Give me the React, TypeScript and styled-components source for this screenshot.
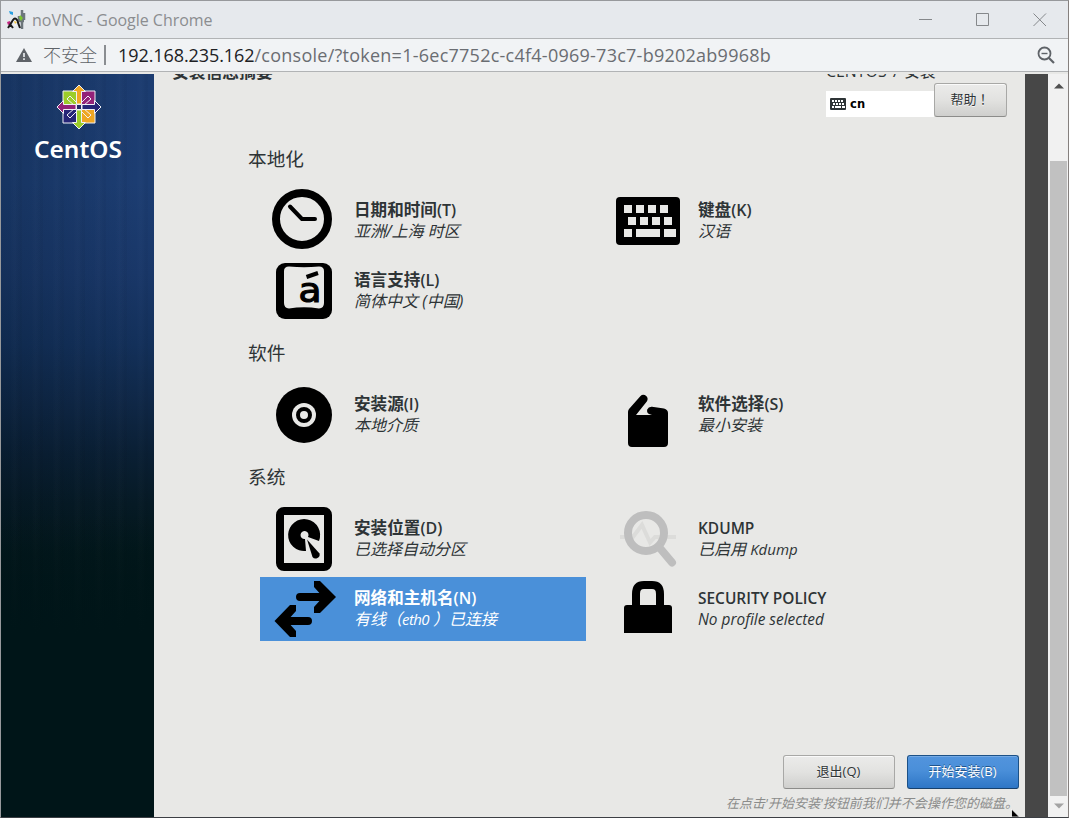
import React from 'react';
import styled, { createGlobalStyle } from 'styled-components';

const GlobalStyle = createGlobalStyle`
  * { box-sizing: border-box; }
  body { margin: 0; overflow: hidden; background: #e8e8e6; }
`;

const uiFont = '"Open Sans", "Noto Sans CJK SC", sans-serif';
const chromeFont = '"Open Sans", "Noto Sans CJK SC", sans-serif';

const Window = styled.div`
  width: 1069px;
  height: 818px;
  display: flex;
  flex-direction: column;
  overflow: hidden;
  border: 1px solid #97999c;
  border-right-color: #85807e;
  border-bottom-color: #3c3f44;
  font-family: ${uiFont};
  color: #2e3436;
`;

const TitleBar = styled.header`
  flex: none;
  height: 37px;
  display: flex;
  align-items: center;
  background: #e6e9ed;
  padding: 0 21px 0 5px;
`;

const WindowTitle = styled.span`
  margin-left: 6px;
  flex: 1;
  font: 400 16px/24px ${chromeFont};
  letter-spacing: -0.03px;
  color: #8b8d90;
  white-space: nowrap;
`;

const WindowControls = styled.div`
  display: flex;
  align-items: center;
  gap: 43px;
  svg { display: block; }
`;

const AddressBar = styled.div`
  flex: none;
  height: 34px;
  display: flex;
  align-items: center;
  background: #f1f3f5;
  border-top: 1px solid #b1b3b5;
  border-bottom: 1px solid #b1b3b5;
  padding: 0 13px 0 15px;
  font: 400 18px/28px ${chromeFont};
  white-space: nowrap;
`;

const Insecure = styled.span`
  margin-left: 11px;
  color: #5f6368;
  font-weight: 300;
`;

const Divider = styled.span`
  width: 2px;
  height: 20px;
  margin: 0 12px 0 7px;
  background: #8a8d91;
`;

const Url = styled.span`
  flex: 1;
  color: #6a6d72;
  letter-spacing: 0.17px;
  b { font-weight: 400; color: #202124; letter-spacing: -0.08px; }
`;

const UrlPath = styled.span`
  letter-spacing: 0.25px;
`;

const Viewport = styled.div`
  flex: 1;
  min-height: 0;
  display: flex;
  margin-top: 2px;
  overflow: hidden;
`;

const Sidebar = styled.aside`
  flex: none;
  width: 153px;
  display: flex;
  flex-direction: column;
  align-items: center;
  padding: 9px 0 0 2px;
  background:
    linear-gradient(180deg, #1c3c7000 440px, #001518 560px),
    repeating-linear-gradient(90deg, #ffffff00 0 9px, #ffffff03 13px 14px, #00000008 19px 21px),
    linear-gradient(90deg, #00101c30, transparent 90%),
    linear-gradient(180deg, #1c3c70 0, #1c3d72 110px, #193768 200px, #13305a 270px, #0f2746 330px, #0a1f34 380px, #061a25 430px, #02171b 480px, #001518 540px);
`;

const Main = styled.main`
  flex: none;
  width: 871px;
  display: flex;
  flex-direction: column;
  overflow: hidden;
  background: #e8e8e6;
`;

const HubHeader = styled.div`
  flex: none;
  height: 70px;
  display: flex;
  justify-content: space-between;
  padding: 0 18px;
`;

const HubTitle = styled.h1`
  margin: -11px 0 0;
  font-size: 16.8px;
  line-height: 17px;
  font-weight: 700;
`;

const HeaderRight = styled.div`
  width: 181px;
`;

const ProductName = styled.div`
  height: 20px;
  margin-top: -11px;
  font-size: 15.9px;
  line-height: 17px;
  white-space: nowrap;
`;

const HeaderControls = styled.div`
  display: flex;
  align-items: flex-end;
`;

const Layout = styled.div`
  flex: 1;
  height: 26px;
  display: flex;
  align-items: center;
  gap: 4px;
  padding-left: 4px;
  background: #fff;
  color: #000;
  font: 700 11.5px/26px "DejaVu Sans", sans-serif;
  letter-spacing: 0.3px;
`;

const Button = styled.button<{ $width: number; $primary?: boolean }>`
  width: ${(p) => p.$width}px;
  height: 34px;
  padding: 0 1px 2px 0;
  border: 1px solid ${(p) => (p.$primary ? '#1c5187' : '#a8a8a6')};
  border-bottom-color: ${(p) => (p.$primary ? '#17406c' : '#8c8c8a')};
  border-radius: 3px;
  background: ${(p) => (p.$primary ? 'linear-gradient(#5294dd, #4a8fd9 45%, #2e76c6)' : 'linear-gradient(#ebebea, #e2e2e0 50%, #cfcfcd)')};
  box-shadow: inset 0 1px ${(p) => (p.$primary ? '#75aae4' : '#fafafa')};
  color: ${(p) => (p.$primary ? '#fff' : '#2e3436')};
  text-shadow: 0 ${(p) => (p.$primary ? '-1px #22558c' : '1px #f6f6f6')};
  font: 400 13px/30px ${uiFont};
`;

const WideMark = styled.span`
  font-family: "Noto Sans CJK TC", sans-serif;
`;

const Sections = styled.div`
  flex: 1;
  display: flex;
  flex-direction: column;
  gap: 15px;
  padding-left: 94px;
`;

const Heading = styled.h2`
  margin: 0 0 15px;
  font-size: 18.67px;
  line-height: 30px;
  font-weight: 400;
`;

const SpokeGrid = styled.div`
  display: grid;
  grid-template-columns: 326px 326px;
  column-gap: 18px;
  row-gap: 6px;
  margin-left: 12px;
`;

const SpokeCard = styled.div<{ $selected?: boolean }>`
  height: 64px;
  display: flex;
  padding-left: 12px;
  background: ${(p) => (p.$selected ? '#4a90d9' : 'transparent')};
  color: ${(p) => (p.$selected ? '#fff' : 'inherit')};
  > svg { flex: none; display: block; }
`;

const SpokeText = styled.div`
  padding: 10px 0 0 18px;
  white-space: nowrap;
`;

const SpokeName = styled.div`
  font-size: 16.6px;
  line-height: 21px;
  font-weight: 700;
`;

const Latin = styled.span<{ $size: number; $ls?: number; $weight?: number }>`
  font-size: ${(p) => p.$size}px;
  letter-spacing: ${(p) => p.$ls ?? 0}px;
  font-weight: ${(p) => p.$weight ?? 'inherit'};
`;

const SpokeStatus = styled.div`
  font-size: 16px;
  line-height: 21px;
  font-style: italic;
`;

const Footer = styled.footer`
  flex: none;
  height: 62px;
  display: flex;
  flex-direction: column;
  align-items: flex-end;
  padding-right: 6px;
`;

const FooterButtons = styled.div`
  display: flex;
  gap: 12px;
`;

const Note = styled.div`
  margin: 4px 1px 0 0;
  font-size: 13.02px;
  line-height: 20px;
  font-style: italic;
  color: #8b8c8b;
  white-space: nowrap;
`;

const Backdrop = styled.div`
  flex: 1;
  background: #474747;
`;

const Scrollbar = styled.div`
  flex: none;
  width: 20px;
  display: flex;
  flex-direction: column;
  align-items: center;
  background: #f1f1f1;
  padding: 9px 0 8px 1px;
  svg { flex: none; display: block; }
`;

const Thumb = styled.div`
  width: 17px;
  height: 636px;
  margin: 72px 0 7px;
  background: #c1c1c1;
`;

const Pointer = styled.svg`
  position: absolute;
  left: 1010px;
  top: 808px;
`;

const Favicon = () => (
  <svg width="20" height="20" viewBox="0 0 20 20">
    <path d="M16 0v19M13 6v5h5M18 3v7" stroke="#6d767b" strokeWidth="2.5" fill="none" />
    <path d="M3 1l4 1v3l-3-1z" fill="#2a9fe0" />
    <path d="M14 5l3 3-2 3-2-3z" fill="#7bc52c" />
    <path d="M1 12l3-1 1 3-3 1z" fill="#c2237f" />
    <path d="M7 10q2-3 4 0l3 8M7 10l-5 8M4 14l3 4" stroke="#1b1b1b" strokeWidth="2" fill="none" />
    <path d="M7.500 11h3v5h-3z" fill="#f1f1f1" />
    <path d="M8 11l3 1-2 2z" fill="#f4c33a" />
  </svg>
);

const CentosMark = () => (
  <svg width="48" height="48" viewBox="-24 -24 48 48">
    <g stroke="#f0f0f6" strokeWidth="1">
      <path d="M-16-16H-.5V-.5H-16z" fill="#9ccd2a" />
      <path d="M.5-16H16V-.5H.5z" fill="#932279" />
      <path d="M-16 .5H-.5V16H-16z" fill="#262577" />
      <path d="M.5.5H16V16H.5z" fill="#efa724" />
      <g fill="none">
        <path d="M-2-4L-9-11-12-8-4-1M2-4L9-11 12-8 4-1M-2 4L-9 11-12 8-4 1M2 4L9 11 12 8 4 1" />
      </g>
      <path d="M0-22l6.500 6.500H2.500V-3h-5v-12.500h-4z" fill="#efa724" />
      <path d="M22 0l-6.500 6.500V2.500H3v-5h12.500v-4z" fill="#262577" />
      <path d="M0 22l-6.500-6.500h4V3h5v12.500h4z" fill="#9ccd2a" />
      <path d="M-22 0l6.500-6.500v4H-3v5h-12.500v4z" fill="#932279" />
      <path d="M-2.500-2.500h5v5h-5z" fill="#232a66" />
    </g>
  </svg>
);

const Wordmark = () => (
  <svg width="92" height="34" viewBox="0 0 92 34">
    <text x="1" y="27" textLength="88" lengthAdjust="spacingAndGlyphs" fill="#fff" fontFamily="Noto Sans, sans-serif" fontWeight="600" fontSize="22.500">CentOS</text>
  </svg>
);

const Icon = ({ children }: { children: React.ReactNode }) => (
  <svg width="64" height="64" viewBox="0 0 64 64">{children}</svg>
);

const bg = '#e8e8e6';

const ClockIcon = () => (
  <Icon>
    <circle cx="30" cy="30" r="26" fill="none" stroke="#000" strokeWidth="8" />
    <path d="M18 17.500L30 30H43" fill="none" stroke="#000" strokeWidth="4" strokeLinecap="round" strokeLinejoin="round" />
  </Icon>
);

const LanguageIcon = () => (
  <Icon>
    <rect x="4" y="4" width="56" height="56" rx="9" />
    <path d="M17 7.500Q32 9 47 7.500Q52 7.500 52 12V44Q52 49 47 49.500Q32 47 17 49.500Q12 49 12 44V12Q12 7.500 17 7.500Z" fill={bg} />
    <text x="26.500" y="43" fontFamily="DejaVu Sans, sans-serif" fontSize="34" textLength="23" lengthAdjust="spacingAndGlyphs" stroke="#000" strokeWidth="1.200">a</text>
    <path d="M34.500 18L46 14" stroke="#000" strokeWidth="4" />
  </Icon>
);

const KeyboardShape = ({ ink = '#000', paper = bg }: { ink?: string; paper?: string }) => (
  <>
    <rect y="8" width="64" height="48" rx="4" fill={ink} />
    <path d="M8 16h8v8H8zM20 16h8v8h-8zM32 16h8v8h-8zM44 16h8v8h-8zM12 28h8v8h-8zM24 28h8v8h-8zM36 28h8v8h-8zM48 28h8v8h-8zM8 40h8v8H8zM20 40h24v8H20zM48 40h12v8H48z" fill={paper} />
  </>
);

const KeyboardIcon = () => (
  <Icon>
    <KeyboardShape />
  </Icon>
);

const DiscIcon = () => (
  <Icon>
    <circle cx="32" cy="32" r="28" />
    <circle cx="32" cy="32" r="12" fill={bg} />
    <circle cx="32" cy="32" r="6" fill="none" stroke="#000" strokeWidth="4" />
  </Icon>
);

const PackageIcon = () => (
  <Icon>
    <path d="M12 29Q12 27.500 13 26L24.300 13.200Q27 10.500 30 12.800Q32.800 15.500 30.800 18.500L20 32H36L33 31Q30.500 29.500 31.200 26.500Q32.500 23.500 36 23.800L48 25.500Q52 26.500 52 30V60Q52 64 48 64H16Q12 64 12 60Z" />
  </Icon>
);

const DriveIcon = () => (
  <Icon>
    <rect x="8" y="4" width="48" height="56" rx="4" fill="none" stroke="#000" strokeWidth="8" />
    <path d="M36 30L47 34A16 16 0 1 0 34 44L33 32A4 4 0 1 1 36 30Z" />
    <path d="M35 32.500L47.500 46.500A4 4 0 0 1 40.500 50Z" />
  </Icon>
);

const NetworkIcon = () => (
  <Icon>
    <path d="M28 20H54M36 44H10" stroke="#000" strokeWidth="8" strokeLinecap="round" />
    <path d="M42 4H48L64 20L48 36H42V30L51 20L42 10ZM24 28H18L2.500 44L18 60H24V54L15 44L24 34Z" />
  </Icon>
);

const KdumpIcon = () => (
  <Icon>
    <path d="M4 30H17L26 18L34 35.500L39 30H60" fill="none" stroke="#dcdcda" strokeWidth="4" />
    <circle cx="30" cy="26" r="18" fill="none" stroke="#bebebe" strokeWidth="8" />
    <path d="M43 40L56 55.500" stroke="#bebebe" strokeWidth="8" strokeLinecap="round" />
  </Icon>
);

const LockIcon = () => (
  <Icon>
    <path d="M20 30V17Q20 8 28 8H36Q44 8 44 17V30" fill="none" stroke="#000" strokeWidth="8" />
    <path d="M8 31Q8 28 11 28H53Q56 28 56 31V56H8Z" />
  </Icon>
);

interface SpokeProps {
  icon: React.ReactNode;
  name: string;
  accel?: string;
  latin?: boolean;
  selected?: boolean;
  children: React.ReactNode;
}

const Spoke = ({ icon, name, accel, latin, selected, children }: SpokeProps) => (
  <SpokeCard $selected={selected}>
    {icon}
    <SpokeText>
      <SpokeName>
        {latin ? <Latin $size={15.45} $weight={600}>{name}</Latin> : name}
        {accel && <Latin $size={16} $weight={600}>({accel})</Latin>}
      </SpokeName>
      <SpokeStatus>{children}</SpokeStatus>
    </SpokeText>
  </SpokeCard>
);

export default function App() {
  return (
    <>
      <GlobalStyle />
      <Window>
        <TitleBar>
          <Favicon />
          <WindowTitle>noVNC - Google Chrome</WindowTitle>
          <WindowControls>
            <svg width="14" height="14"><path d="M0 6.500H13" stroke="#85888b" /></svg>
            <svg width="14" height="14"><path d="M.5.5h12v12H.5z" fill="none" stroke="#85888b" /></svg>
            <svg width="14" height="14"><path d="M.5.5l12.500 12.500M13 .5L.5 13" stroke="#85888b" /></svg>
          </WindowControls>
        </TitleBar>
        <AddressBar>
          <svg width="16" height="14" viewBox="0 0 16 14">
            <path d="M8 0l8 14H0z" fill="#5f6368" />
            <path d="M7.200 5h1.600v4H7.200zM7.200 10.300h1.600v1.700H7.200z" fill="#f1f3f5" />
          </svg>
          <Insecure>不安全</Insecure>
          <Divider />
          <Url><b>192.168.235.162</b><UrlPath>/console/?token=1-6ec7752c-c4f4-0969-73c7-b9202ab9968b</UrlPath></Url>
          <svg width="18" height="18" viewBox="0 0 18 18" fill="none" stroke="#5f6368">
            <circle cx="7.500" cy="7.500" r="6" strokeWidth="1.800" />
            <path d="M12 12l5 5" strokeWidth="2.200" />
            <path d="M4.500 7.500h6" strokeWidth="1.400" />
          </svg>
        </AddressBar>
        <Viewport>
          <Sidebar>
            <CentosMark />
            <Wordmark />
          </Sidebar>
          <Main>
            <HubHeader>
              <HubTitle>安装信息摘要</HubTitle>
              <HeaderRight>
                <ProductName>CENTOS 7 安装</ProductName>
                <HeaderControls>
                  <Layout>
                    <svg width="16" height="12" viewBox="0 8 64 48"><KeyboardShape ink="#2e3436" paper="#fff" /></svg>
                    cn
                  </Layout>
                  <Button $width={73}>帮助<WideMark>！</WideMark></Button>
                </HeaderControls>
              </HeaderRight>
            </HubHeader>
            <Sections>
              <section>
                <Heading>本地化</Heading>
                <SpokeGrid>
                  <Spoke icon={<ClockIcon />} name="日期和时间" accel="T">亚洲/上海 时区</Spoke>
                  <Spoke icon={<KeyboardIcon />} name="键盘" accel="K">汉语</Spoke>
                  <Spoke icon={<LanguageIcon />} name="语言支持" accel="L">简体中文 (中国)</Spoke>
                </SpokeGrid>
              </section>
              <section>
                <Heading>软件</Heading>
                <SpokeGrid>
                  <Spoke icon={<DiscIcon />} name="安装源" accel="I">本地介质</Spoke>
                  <Spoke icon={<PackageIcon />} name="软件选择" accel="S">最小安装</Spoke>
                </SpokeGrid>
              </section>
              <section>
                <Heading>系统</Heading>
                <SpokeGrid>
                  <Spoke icon={<DriveIcon />} name="安装位置" accel="D">已选择自动分区</Spoke>
                  <Spoke icon={<KdumpIcon />} name="KDUMP" latin>已启用 <Latin $size={15}>Kdump</Latin></Spoke>
                  <Spoke icon={<NetworkIcon />} name="网络和主机名" accel="N" selected>有线（<Latin $size={15} $ls={-0.6}>eth0</Latin> ）已连接</Spoke>
                  <Spoke icon={<LockIcon />} name="SECURITY POLICY" latin><Latin $size={15.4}>No profile selected</Latin></Spoke>
                </SpokeGrid>
              </section>
            </Sections>
            <Footer>
              <FooterButtons>
                <Button $width={112}>退出(Q)</Button>
                <Button $width={112} $primary>开始安装(B)</Button>
              </FooterButtons>
              <Note>在点击'开始安装'按钮前我们并不会操作您的磁盘。</Note>
            </Footer>
          </Main>
          <Backdrop />
          <Scrollbar>
            <svg width="10" height="6"><path d="M0 5.500L5 .5l5 5z" fill="#505050" /></svg>
            <Thumb />
            <svg width="10" height="6"><path d="M0 .5L5 5.500l5-5z" fill="#a3a3a3" /></svg>
          </Scrollbar>
        </Viewport>
      </Window>
      <Pointer width="12" height="9"><path d="M1.500 1v8h8z" fill="#000" stroke="#fff" strokeWidth=".8" /></Pointer>
    </>
  );
}
